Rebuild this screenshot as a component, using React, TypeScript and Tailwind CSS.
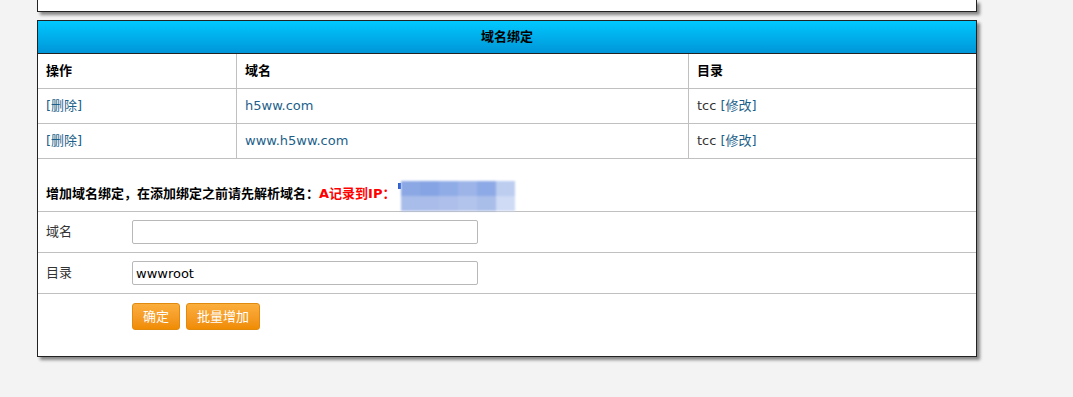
import React from "react";

const F = { fontFamily: '"DejaVu Sans", "Noto Sans CJK SC", sans-serif' };

export default function App() {
  return (
    <div
      className="min-h-[397px] w-full bg-[#f3f3f3] text-[13px] text-[#222]"
      style={F}
    >
      <div className="ml-[37px] h-[12px] w-[940px] border-x border-b border-[#222] bg-white shadow-[3px_3px_3px_rgba(0,0,0,0.45)]" />
      <div className="ml-[37px] mt-[8px] w-[940px] border border-[#222] bg-white shadow-[3px_3px_3px_rgba(0,0,0,0.45)]">
        <div className="flex h-[33px] items-center justify-center border-b border-[#222] bg-gradient-to-b from-[#00c8ff] to-[#0096d8] font-bold text-black">
          域名绑定
        </div>
        <div className="grid grid-cols-[198px_1px_451px_1px_287px]">
          <Cell bold>操作</Cell>
          <Div />
          <Cell bold>域名</Cell>
          <Div />
          <Cell bold>目录</Cell>
          <Line />

          <Cell>
            <span className="text-[#1d5f8a]">[删除]</span>
          </Cell>
          <Div />
          <Cell>
            <span className="text-[#1d5f8a]">h5ww.com</span>
          </Cell>
          <Div />
          <Cell>
            <span className="text-[#333]">tcc</span>
            <span className="ml-[4px] text-[#1d5f8a]">[修改]</span>
          </Cell>
          <Line />

          <Cell>
            <span className="text-[#1d5f8a]">[删除]</span>
          </Cell>
          <Div />
          <Cell>
            <span className="text-[#1d5f8a]">www.h5ww.com</span>
          </Cell>
          <Div />
          <Cell>
            <span className="text-[#333]">tcc</span>
            <span className="ml-[4px] text-[#1d5f8a]">[修改]</span>
          </Cell>
          <Line />
        </div>

        <div className="flex h-[53px] items-end border-b border-[#c0c0c0] pb-[8px] pl-[8px]">
          <span className="font-bold text-black">增加域名绑定，在添加绑定之前请先解析域名：</span>
          <span className="font-bold text-[#ff0000]">A记录到IP：</span>
          <div className="relative mb-[-11px] ml-[3px] h-[32px] w-[124px]">
            <div className="absolute left-0 top-[1px] h-[6px] w-[3px] bg-[#3060d0]" />
            <div className="ml-[3px] mt-[-1px] grid h-[30px] w-[114px] grid-cols-6 grid-rows-2 blur-[1px]">
              <div className="bg-[#8ca8e4]" />
              <div className="bg-[#86a4e4]" />
              <div className="bg-[#90ace6]" />
              <div className="bg-[#9cb4e8]" />
              <div className="bg-[#8eaae6]" />
              <div className="bg-[#bccdf0]" />
              <div className="bg-[#a9bdea]" />
              <div className="bg-[#aabdea]" />
              <div className="bg-[#adbfea]" />
              <div className="bg-[#b3c4ec]" />
              <div className="bg-[#aabeea]" />
              <div className="bg-[#cfdaf4]" />
            </div>
          </div>
        </div>

        <div className="flex h-[41px] items-center border-b border-[#c0c0c0]">
          <div className="w-[94px] pl-[8px] text-[#333]">域名</div>
          <input
            className="h-[24px] w-[346px] rounded-[2px] border border-[#b8b8b8] bg-white px-[3px] text-[13px] text-black outline-none"
            style={F}
            defaultValue=""
          />
        </div>
        <div className="flex h-[41px] items-center border-b border-[#c0c0c0]">
          <div className="w-[94px] pl-[8px] text-[#333]">目录</div>
          <input
            className="h-[24px] w-[346px] rounded-[2px] border border-[#b8b8b8] bg-white px-[3px] text-[13px] text-black outline-none"
            style={F}
            defaultValue="wwwroot"
          />
        </div>
        <div className="flex h-[62px] items-start gap-[6px] pl-[94px] pt-[9px]">
          <Btn w="w-[48px]">确定</Btn>
          <Btn w="w-[74px]">批量增加</Btn>
        </div>
      </div>
    </div>
  );
}

function Cell({ children, bold }: { children: React.ReactNode; bold?: boolean }) {
  return (
    <div
      className={
        "flex h-[34px] items-center pl-[8px] " +
        (bold ? "font-bold text-black" : "")
      }
    >
      {children}
    </div>
  );
}

function Div() {
  return <div className="h-[34px] w-[1px] bg-[#c0c0c0]" />;
}

function Line() {
  return <div className="col-span-5 h-[1px] bg-[#c0c0c0]" />;
}

function Btn({ children, w }: { children: React.ReactNode; w: string }) {
  return (
    <button
      className={
        w +
        " h-[27px] rounded-[3px] border border-[#e08a10] bg-gradient-to-b from-[#fbae3c] to-[#f08c00] text-[13px] text-white"
      }
      style={F}
    >
      {children}
    </button>
  );
}
